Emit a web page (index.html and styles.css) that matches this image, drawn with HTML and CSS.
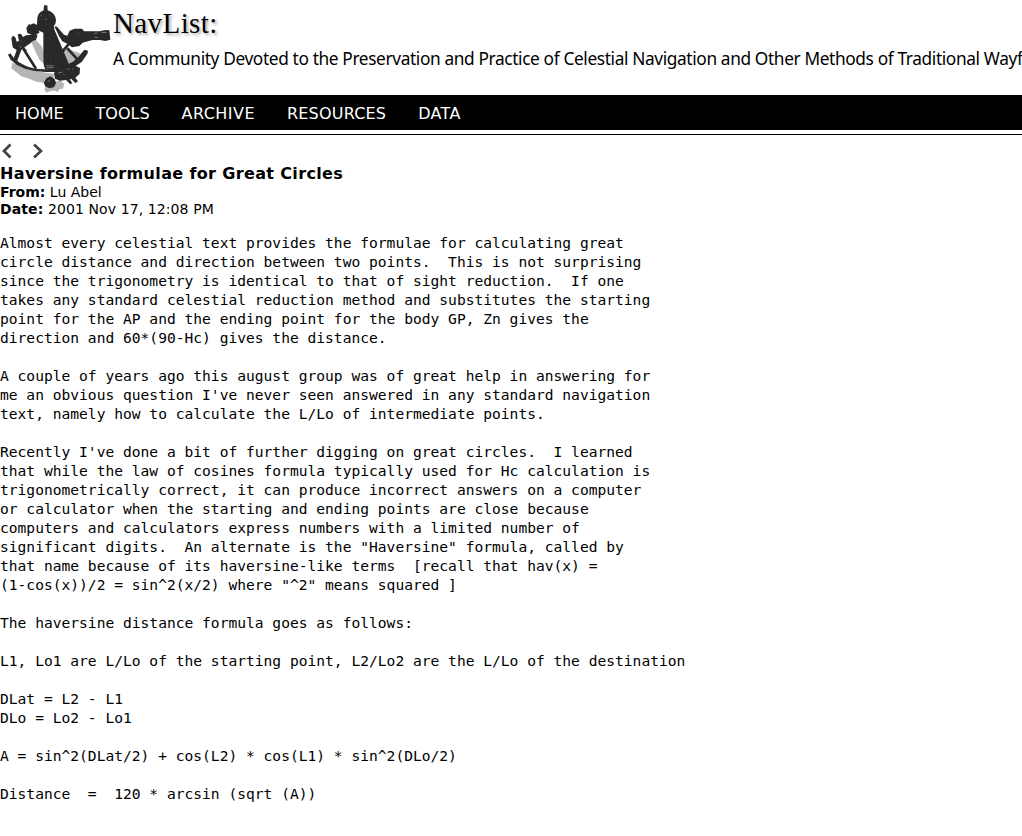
FILE: index.html
```html
<!DOCTYPE html>
<html lang="en">
<head>
<meta charset="utf-8">
<title>NavList: Haversine formulae for Great Circles</title>
<link rel="stylesheet" href="styles.css">
</head>
<body>
<header class="masthead">
  <svg class="logo" viewBox="0 0 339 285" aria-hidden="true">
    <g class="logo-shadow">
      <path d="M37 188L60 196L78 206L130 217L162 222L160 246L138 249Q110 247 88 236L64 229L48 216L34 205Z"/>
      <path d="M92 122L108 120L126 140L131 160L128 188L119 180L108 158Z"/>
      <path d="M188 146L203 140L213 150L236 158L251 166L250 182L236 190L218 187L204 195L192 183Z"/>
      <path d="M137 258L157 250L180 240L193 252L189 266L178 267L174 276L164 272L152 273L140 278L133 269Z"/>
    </g>
    <g class="logo-body">
      <path d="M132 16L142 16L143 31Q166 38 168 61Q168 72 161 78L164 91L207 193L196 203L177 202L165 210L135 207L130 190L130 98L114 91L101 98L86 90L88 76L101 70L111 75L112 53Q115 37 131 31Z"/>
      <path d="M163 79L171 80L192 104L202 107L209 92L224 86L246 86L252 94L299 94L312 91L328 90L331 119L316 123L300 120L277 120L248 128L238 138L216 142L203 132L187 124L178 110Z"/>
      <path d="M79 84L87 72L97 78L108 80L119 97L108 105L96 105L82 99Z"/>
      <path d="M53 103L63 101L69 111L78 106L98 104L113 106L108 119L97 124L91 130L74 142L64 150L50 187L39 181L50 151L38 142L34 115L39 107L46 112L50 125L57 123Z"/>
      <path d="M24 164L31 160L42 175L57 187L78 198L104 206L136 208L163 207L192 198L219 185L237 169L253 149L264 152L262 162L244 187L216 205L178 216L137 216L104 213L75 206L50 194L32 179Z"/>
      <path d="M174 199L192 193L211 196L223 190L229 199L240 204L239 221L226 233L234 244L226 249L214 237L209 238L217 249L211 253L198 240L180 242L165 236L162 220Z"/>
      <path d="M139 235L151 229L164 237L168 249L162 261L150 265L137 260L131 249Z"/>
      <path class="strut" d="M173 192L191 150L208 130M202 145L235 181M71 148L108 206M64 139L78 154"/>
    </g>
    <g class="logo-light">
      <path d="M136 58L140 58M122 47L126 47M149 47L151 48M138 197L160 198M139 203L161 203M174 219L188 216M202 207L209 208M62 122L65 124M59 139L64 142M283 100L292 99M304 98L320 97M284 112L294 113M143 244L150 242M235 100L236 103M101 207L103 208M121 210L123 210M84 201L86 202M63 192L65 193M190 223L193 224M150 182L152 183M217 207L220 207"/>
    </g>
  </svg>
  <div class="branding">
    <div class="site-name">NavList:</div>
    <div class="tagline">A Community Devoted to the Preservation and Practice of Celestial Navigation and Other Methods of Traditional Wayf</div>
  </div>
</header>
<nav class="menu">
  <a class="item home">HOME</a>
  <a class="item tools">TOOLS</a>
  <a class="item archive">ARCHIVE</a>
  <a class="item resources">RESOURCES</a>
  <a class="item data">DATA</a>
</nav>
<main class="message">
  <div class="pager">
    <svg class="arrow" viewBox="0 0 12 16"><path d="M10.5 1.5L4 8L10.5 14.5"/></svg>
    <svg class="arrow" viewBox="0 0 12 16"><path d="M3 1.5L10 8L3 14.5"/></svg>
  </div>
  <h1 class="subject">Haversine formulae for Great Circles</h1>
  <div class="meta"><b>From:</b> Lu Abel</div>
  <div class="meta date"><b>Date:</b> 2001 Nov 17, 12:08 PM</div>
<pre class="body">Almost every celestial text provides the formulae for calculating great
circle distance and direction between two points.  This is not surprising
since the trigonometry is identical to that of sight reduction.  If one
takes any standard celestial reduction method and substitutes the starting
point for the AP and the ending point for the body GP, Zn gives the
direction and 60*(90-Hc) gives the distance.

A couple of years ago this august group was of great help in answering for
me an obvious question I've never seen answered in any standard navigation
text, namely how to calculate the L/Lo of intermediate points.

Recently I've done a bit of further digging on great circles.  I learned
that while the law of cosines formula typically used for Hc calculation is
trigonometrically correct, it can produce incorrect answers on a computer
or calculator when the starting and ending points are close because
computers and calculators express numbers with a limited number of
significant digits.  An alternate is the "Haversine" formula, called by
that name because of its haversine-like terms  [recall that hav(x) =
(1-cos(x))/2 = sin^2(x/2) where "^2" means squared ]

The haversine distance formula goes as follows:

L1, Lo1 are L/Lo of the starting point, L2/Lo2 are the L/Lo of the destination

DLat = L2 - L1
DLo = Lo2 - Lo1

A = sin^2(DLat/2) + cos(L2) * cos(L1) * sin^2(DLo/2)

Distance  =  120 * arcsin (sqrt (A))</pre>
</main>
</body>
</html>
```
FILE: styles.css
```css
body {
  margin: 0;
  height: 836px;
  overflow: hidden;
  background: #fff;
  color: #000;
  font-family: "DejaVu Sans", sans-serif;
}
.masthead {
  display: flex;
  height: 95px;
}
.logo {
  flex: none;
  width: 113px;
  height: 95px;
}
.logo-shadow { fill: #b5b5b5; }
.logo-body { fill: #292929; }
.strut { fill: none; stroke: #292929; stroke-width: 8; }
.logo-light { fill: none; stroke: #777; stroke-width: 3; }
.branding { white-space: nowrap; }
.site-name {
  height: 47px;
  font: 29px/47px "Liberation Serif", serif;
  letter-spacing: 0.4px;
  text-shadow: 2px 2px 3px #aaa;
}
.tagline {
  font: 17.3px/23px "Noto Sans", sans-serif;
  letter-spacing: -0.37px;
}
.menu {
  display: flex;
  gap: 32px;
  height: 35px;
  padding-left: 15px;
  background: #000;
  color: #fff;
  font-size: 16px;
  line-height: 37px;
}
.archive { letter-spacing: 0.45px; }
.resources { letter-spacing: 0.2px; }
.data { letter-spacing: 0.3px; }
.message {
  margin-top: 4px;
  border-top: 1px solid #000;
}
.pager {
  display: flex;
  gap: 19px;
  height: 20px;
  padding-top: 8px;
}
.arrow {
  width: 12px;
  height: 16px;
  fill: none;
  stroke: #444;
  stroke-width: 2.8;
}
.subject {
  margin: 0;
  font-size: 16px;
  line-height: 21px;
  letter-spacing: 0.35px;
}
.meta {
  font-size: 14px;
  line-height: 17px;
}
.date { letter-spacing: 0.1px; }
.body {
  margin: 15px 0 0;
  font: 14.6px/19px "DejaVu Sans Mono", monospace;
}
```
